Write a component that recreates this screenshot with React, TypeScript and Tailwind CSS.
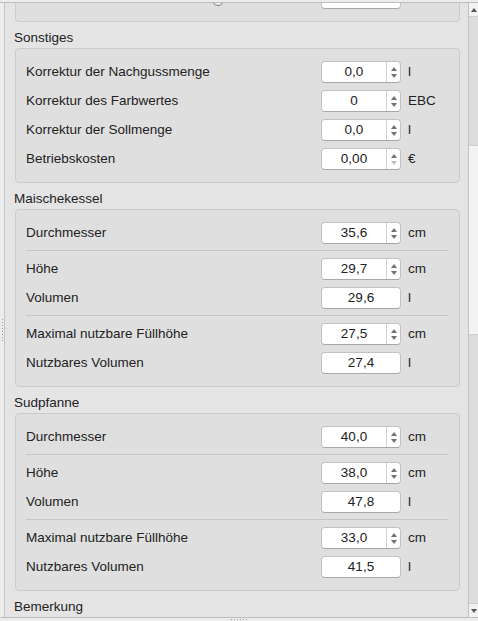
import React from "react";

type Row = { label: string; value: string; unit: string; spin?: boolean; dim?: boolean };

const sonstiges: Row[] = [
  { label: "Korrektur der Nachgussmenge", value: "0,0", unit: "l", spin: true },
  { label: "Korrektur des Farbwertes", value: "0", unit: "EBC", spin: true },
  { label: "Korrektur der Sollmenge", value: "0,0", unit: "l", spin: true },
  { label: "Betriebskosten", value: "0,00", unit: "€", spin: true, dim: true },
];

function kessel(d: string, h: string, v: string, m: string, n: string): Row[][] {
  return [
    [{ label: "Durchmesser", value: d, unit: "cm", spin: true }],
    [
      { label: "Höhe", value: h, unit: "cm", spin: true },
      { label: "Volumen", value: v, unit: "l" },
    ],
    [
      { label: "Maximal nutzbare Füllhöhe", value: m, unit: "cm", spin: true },
      { label: "Nutzbares Volumen", value: n, unit: "l" },
    ],
  ];
}

function Spinner({ dim }: { dim?: boolean }) {
  return (
    <div className="flex w-[14px] shrink-0 flex-col items-center justify-center gap-[3px] border-l border-[#d2d2d2]">
      <svg width="6" height="4" viewBox="0 0 6 4">
        <path d="M3 0L6 4H0z" fill="#727272" />
      </svg>
      <svg width="6" height="4" viewBox="0 0 6 4">
        <path d="M0 0H6L3 4z" fill={dim ? "#bdbdbd" : "#727272"} />
      </svg>
    </div>
  );
}

function Field({ value, spin, dim }: { value: string; spin?: boolean; dim?: boolean }) {
  return (
    <div className="flex h-[22px] w-[80px] shrink-0 overflow-hidden rounded-[4px] border border-[#c2c2c2] border-b-[#a8a8a8] bg-white">
      <div className="flex flex-1 items-center justify-center">{value}</div>
      {spin && <Spinner dim={dim} />}
    </div>
  );
}

function FormRow({ row }: { row: Row }) {
  return (
    <div className="flex h-[22px] items-center">
      <div className="w-[295px] shrink-0">{row.label}</div>
      <Field value={row.value} spin={row.spin} dim={row.dim} />
      <span className="ml-[7px]">{row.unit}</span>
    </div>
  );
}

function Header({ title }: { title: string }) {
  return <div className="-ml-px flex h-[26px] items-center pt-[6px]">{title}</div>;
}

function Box({ children }: { children: React.ReactNode }) {
  return (
    <div className="rounded-[4px] border border-[#cbcbcb] bg-[#dfdfdf] py-[12px] pl-[10px] pr-[11px]">
      {children}
    </div>
  );
}

function KesselBox({ groups }: { groups: Row[][] }) {
  return (
    <Box>
      {groups.map((g, i) => (
        <div key={i}>
          {i > 0 && <div className="mb-[7px] mt-[6px] border-t border-[#c6c6c6]" />}
          <div className="flex flex-col gap-[7px]">
            {g.map((r) => (
              <FormRow key={r.label} row={r} />
            ))}
          </div>
        </div>
      ))}
    </Box>
  );
}

function Scrollbar() {
  return (
    <div className="flex w-[10px] shrink-0 flex-col border-l border-[#c3c3c3] bg-[#dcdcdc]">
      <div className="flex h-[14px] items-center justify-center border-b border-[#cfcfcf] bg-[#f2f2f2]">
        <svg width="6" height="4" viewBox="0 0 6 4">
          <path d="M3 0L6 4H0z" fill="#555" />
        </svg>
      </div>
      <div className="flex flex-1 flex-col">
        <div className="h-[128px]" />
        <div className="h-[190px] border-y border-[#cfcfcf] bg-[#f3f3f3]" />
      </div>
      <div className="flex h-[14px] items-center justify-center border-t border-[#cfcfcf] bg-[#f2f2f2]">
        <svg width="6" height="4" viewBox="0 0 6 4">
          <path d="M0 0H6L3 4z" fill="#555" />
        </svg>
      </div>
    </div>
  );
}

export default function App() {
  return (
    <div className="flex h-[621px] w-[478px] flex-col overflow-hidden bg-[#ececec] font-['Liberation_Sans',Arial,sans-serif] text-[13.5px] text-[#222]">
      <div className="h-[2px] shrink-0" />
      <div className="flex min-h-0 flex-1 border-y border-[#bdbdbd]">
        <div className="flex w-[4px] shrink-0 flex-col items-center justify-center gap-[2px] pt-[40px]">
          {Array.from({ length: 8 }).map((_, i) => (
            <div key={i} className="h-px w-px bg-[#9a9a9a]" />
          ))}
        </div>
        <div className="min-w-0 flex-1 overflow-hidden border-l border-[#c4c4c4] bg-[#e4e4e4] pl-[10px] pr-[8px]">
          <div className="-mt-[30px]">
            <div className="rounded-[4px] border border-[#cbcbcb] bg-[#dfdfdf] pb-[12px] pl-[10px] pr-[11px] pt-[13px]">
              <div className="flex h-[22px] items-center">
                <div className="w-[186px] shrink-0" />
                <div className="mt-[4px] h-[12px] w-[12px] rounded-full border border-[#7c7c7c] bg-[#efefef]" />
                <div className="w-[97px] shrink-0" />
                <Field value="" />
              </div>
            </div>
            <Header title="Sonstiges" />
            <Box>
              <div className="flex flex-col gap-[7px]">
                {sonstiges.map((r) => (
                  <FormRow key={r.label} row={r} />
                ))}
              </div>
            </Box>
            <Header title="Maischekessel" />
            <KesselBox groups={kessel("35,6", "29,7", "29,6", "27,5", "27,4")} />
            <Header title="Sudpfanne" />
            <KesselBox groups={kessel("40,0", "38,0", "47,8", "33,0", "41,5")} />
            <Header title="Bemerkung" />
            <div className="h-[60px] rounded-[4px] border border-[#cbcbcb] bg-[#dfdfdf]" />
          </div>
        </div>
        <Scrollbar />
      </div>
      <div className="flex h-[3px] shrink-0 items-center justify-center gap-[2px]">
        {Array.from({ length: 6 }).map((_, i) => (
          <div key={i} className="h-px w-px bg-[#9a9a9a]" />
        ))}
      </div>
    </div>
  );
}
